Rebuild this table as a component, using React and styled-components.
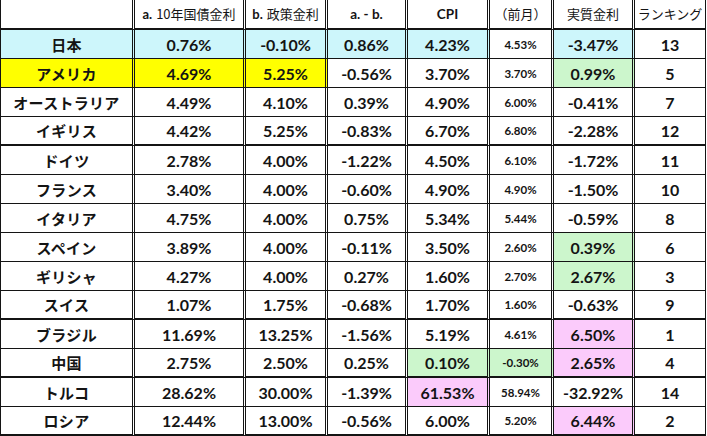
import React from "react";
import styled, { createGlobalStyle } from "styled-components";

const GlobalStyle = createGlobalStyle`
  body {
    margin: 0;
    background: #fff;
    color: #141414;
  }
`;

// cell background colours taken from the sheet
const fills = {
  c: "#cdf6fb",
  y: "#ffff00",
  g: "#ccf6cc",
  p: "#fbcbfb",
};

// widths include each cell's right border
const Sheet = styled.div`
  display: grid;
  grid-template-columns: 134px 111px 82px 80px 82px 64px 81px 71px;
  grid-template-rows: 30px;
  grid-auto-rows: 29px;
  width: 706px;
  border-left: 1px solid #141414;
`;

const Cell = styled.div`
  box-sizing: border-box;
  display: flex;
  align-items: center;
  justify-content: center;
  background: ${(p) => fills[p.$fill] || "#fff"};
  border-right: ${(p) => (p.$last ? "1px solid #141414" : "3px double #141414")};
  border-bottom: ${(p) => (p.$thick ? 2 : 1)}px solid #141414;
  font-family: "Lato", "Noto Sans CJK JP", sans-serif;
  font-weight: 700;
  font-size: ${(p) => (p.$small ? "11.5px" : "16px")};
  white-space: nowrap;
`;

const HeadCell = styled(Cell)`
  border-bottom-width: 2px;
  font-family: ${(p) => (p.$latin ? '"Lato", sans-serif' : '"Noto Sans CJK JP", sans-serif')};
  font-weight: ${(p) => (p.$latin ? 700 : 400)};
  font-size: ${(p) => (p.$latin ? "13.5px" : "13px")};
  padding-bottom: 1px;
`;

const NameCell = styled(Cell)`
  font-family: "Noto Sans CJK JP", sans-serif;
  font-size: 15px;
  letter-spacing: 0.3px;
`;

const Head = styled.span`
  font-family: "Lato", sans-serif;
  font-weight: 700;
  margin-right: 4px;
`;

const rows = [
  { name: "日本", v: ["0.76%", "-0.10%", "0.86%", "4.23%", "4.53%", "-3.47%", "13"], f: ["c", "c", "c", "c", "c", "", "c", ""] },
  { name: "アメリカ", v: ["4.69%", "5.25%", "-0.56%", "3.70%", "3.70%", "0.99%", "5"], f: ["y", "y", "y", "", "", "", "g", ""] },
  { name: "オーストラリア", v: ["4.49%", "4.10%", "0.39%", "4.90%", "6.00%", "-0.41%", "7"], f: [] },
  { name: "イギリス", v: ["4.42%", "5.25%", "-0.83%", "6.70%", "6.80%", "-2.28%", "12"], f: [], thick: true },
  { name: "ドイツ", v: ["2.78%", "4.00%", "-1.22%", "4.50%", "6.10%", "-1.72%", "11"], f: [] },
  { name: "フランス", v: ["3.40%", "4.00%", "-0.60%", "4.90%", "4.90%", "-1.50%", "10"], f: [] },
  { name: "イタリア", v: ["4.75%", "4.00%", "0.75%", "5.34%", "5.44%", "-0.59%", "8"], f: [] },
  { name: "スペイン", v: ["3.89%", "4.00%", "-0.11%", "3.50%", "2.60%", "0.39%", "6"], f: ["", "", "", "", "", "", "g", ""] },
  { name: "ギリシャ", v: ["4.27%", "4.00%", "0.27%", "1.60%", "2.70%", "2.67%", "3"], f: ["", "", "", "", "", "", "g", ""] },
  { name: "スイス", v: ["1.07%", "1.75%", "-0.68%", "1.70%", "1.60%", "-0.63%", "9"], f: [], thick: true },
  { name: "ブラジル", v: ["11.69%", "13.25%", "-1.56%", "5.19%", "4.61%", "6.50%", "1"], f: ["", "", "", "", "", "", "p", ""] },
  { name: "中国", v: ["2.75%", "2.50%", "0.25%", "0.10%", "-0.30%", "2.65%", "4"], f: ["", "", "", "", "g", "g", "p", ""], thick: true },
  { name: "トルコ", v: ["28.62%", "30.00%", "-1.39%", "61.53%", "58.94%", "-32.92%", "14"], f: ["", "", "", "", "p", "", "", ""] },
  { name: "ロシア", v: ["12.44%", "13.00%", "-0.56%", "6.00%", "5.20%", "6.44%", "2"], f: ["", "", "", "", "", "", "p", ""], thick: true },
];

export default function App() {
  return (
    <>
      <GlobalStyle />
      <Sheet>
        <HeadCell />
        <HeadCell>
          <Head>a.</Head>10年国債金利
        </HeadCell>
        <HeadCell>
          <Head>b.</Head>政策金利
        </HeadCell>
        <HeadCell $latin>a. - b.</HeadCell>
        <HeadCell $latin>CPI</HeadCell>
        <HeadCell>（前月）</HeadCell>
        <HeadCell>実質金利</HeadCell>
        <HeadCell $last>ランキング</HeadCell>

        {rows.map((row) => (
          <React.Fragment key={row.name}>
            <NameCell $fill={row.f[0]} $thick={row.thick}>
              {row.name}
            </NameCell>
            {row.v.map((val, i) => (
              <Cell
                key={i}
                $fill={row.f[i + 1]}
                $thick={row.thick}
                $small={i === 4}
                $last={i === 6}
              >
                {val}
              </Cell>
            ))}
          </React.Fragment>
        ))}
      </Sheet>
    </>
  );
}
